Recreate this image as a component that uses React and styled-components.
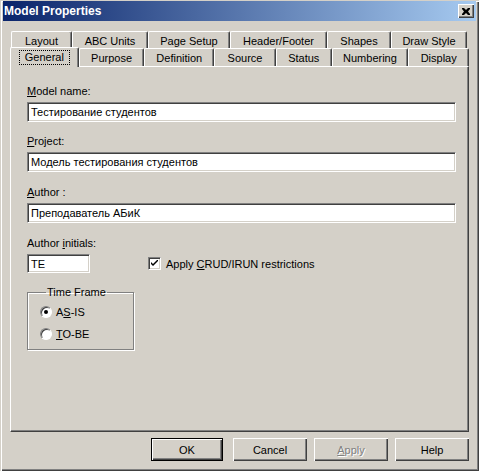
import React from "react";
import styled, { createGlobalStyle } from "styled-components";

const GlobalStyle = createGlobalStyle`
  html, body {
    margin: 0;
    padding: 0;
    background: #d4d0c8;
  }
  body {
    font-family: "Liberation Sans", Arial, sans-serif;
    font-size: 11px;
    color: #000;
  }
`;

const Window = styled.div`
  width: 479px;
  height: 471px;
  box-sizing: border-box;
  background: #d4d0c8;
  padding: 1px 3px 3px 3px;
  box-shadow: inset 1px 1px #d4d0c8, inset 2px 2px #fff, inset -1px -1px #404040,
    inset -2px -2px #808080;
  display: flex;
  flex-direction: column;
`;

const TitleBar = styled.div`
  height: 20px;
  display: flex;
  align-items: center;
  justify-content: space-between;
  padding: 0 2px 0 1px;
  background: linear-gradient(to right, #0a246a, #a6caf0);
`;

const Title = styled.span`
  color: #fff;
  font-weight: bold;
  font-size: 12px;
`;

const CloseButton = styled.div`
  width: 16px;
  height: 14px;
  box-sizing: border-box;
  background: #d4d0c8;
  display: flex;
  align-items: center;
  justify-content: center;
  box-shadow: inset 1px 1px #fff, inset -1px -1px #404040, inset -2px -2px #808080;
`;

const Content = styled.div`
  flex: 1;
  padding: 10px 7px 0 7px;
  display: flex;
  flex-direction: column;
`;

const TabRow = styled.div`
  display: flex;
  height: ${(p) => p.$height}px;
  align-items: flex-end;
  padding-left: ${(p) => p.$indent}px;
`;

const Tab = styled.div`
  position: relative;
  width: ${(p) => p.$width}px;
  height: ${(p) => (p.$active ? 20 : 18)}px;
  box-sizing: border-box;
  border-top: 1px solid #fff;
  border-left: 1px solid #fff;
  border-right: 1px solid #404040;
  border-radius: 2px 2px 0 0;
  box-shadow: inset -1px 0 #808080;
  background: #d4d0c8;
  display: flex;
  align-items: center;
  justify-content: center;
  padding-bottom: ${(p) => (p.$active ? 1 : 0)}px;
  margin-left: ${(p) => (p.$active ? -2 : 0)}px;
  margin-bottom: ${(p) => (p.$active ? -1 : 0)}px;
  z-index: ${(p) => (p.$active ? 2 : 1)};
`;

const FocusText = styled.span`
  border: 1px dotted #000;
  padding: 0 5px;
  line-height: 13px;
`;

const Panel = styled.div`
  position: relative;
  height: 366px;
  box-sizing: border-box;
  border-top: 1px solid #fff;
  border-left: 1px solid #fff;
  border-right: 1px solid #404040;
  border-bottom: 1px solid #404040;
  box-shadow: inset -1px -1px #808080;
  padding: 17px 14px 0 16px;
  display: flex;
  flex-direction: column;
`;

const Field = styled.div`
  display: flex;
  flex-direction: column;
  width: ${(p) => (p.$width ? `${p.$width}px` : "auto")};
  margin-bottom: ${(p) => p.$gap}px;
`;

const Label = styled.label`
  height: 14px;
  line-height: 14px;
  margin-bottom: 4px;
  white-space: nowrap;
`;

const Key = styled.span`
  text-decoration: underline;
`;

const Input = styled.div`
  width: ${(p) => p.$width || 429}px;
  height: ${(p) => p.$height || 20}px;
  box-sizing: border-box;
  background: #fff;
  border-top: 1px solid #808080;
  border-left: 1px solid #808080;
  border-right: 1px solid #fff;
  border-bottom: 1px solid #fff;
  box-shadow: inset 1px 1px #404040, inset -1px -1px #d4d0c8;
  padding: 0 3px;
  display: flex;
  align-items: center;
  white-space: nowrap;
`;

const InitialsRow = styled.div`
  display: flex;
  align-items: flex-end;
`;

const CheckLabel = styled.div`
  display: flex;
  align-items: center;
  gap: 5px;
  margin-left: 58px;
  margin-bottom: 3px;
`;

const CheckBox = styled.div`
  width: 13px;
  height: 13px;
  box-sizing: border-box;
  background: #fff;
  border-top: 1px solid #808080;
  border-left: 1px solid #808080;
  border-right: 1px solid #fff;
  border-bottom: 1px solid #fff;
  box-shadow: inset 1px 1px #404040, inset -1px -1px #d4d0c8;
  display: flex;
  align-items: center;
  justify-content: center;
`;

const GroupBox = styled.fieldset`
  width: 107px;
  height: 64px;
  box-sizing: border-box;
  margin: 13px 0 0 0;
  padding: 7px 0 0 12px;
  border: 1px solid #808080;
  box-shadow: 1px 1px #fff, inset 1px 1px #fff;
  display: flex;
  flex-direction: column;
  gap: 9px;
`;

const Legend = styled.legend`
  padding: 0 1px;
  margin-left: 6px;
  line-height: 12px;
`;

const RadioLabel = styled.div`
  display: flex;
  align-items: center;
  gap: 4px;
  height: 13px;
`;

const Radio = styled.div`
  width: 12px;
  height: 12px;
  box-sizing: border-box;
  border-radius: 50%;
  background: #fff;
  border: 1px solid;
  border-color: #808080 #fff #fff #808080;
  box-shadow: inset 1px 1px #404040;
  display: flex;
  align-items: center;
  justify-content: center;
`;

const Dot = styled.div`
  width: 4px;
  height: 4px;
  border-radius: 50%;
  background: #000;
`;

const ButtonRow = styled.div`
  display: flex;
  justify-content: flex-end;
  gap: 7px;
  padding: 6px 0 0 0;
`;

const Button = styled.div`
  width: ${(p) => (p.$default ? 72 : 74)}px;
  height: 23px;
  box-sizing: border-box;
  display: flex;
  align-items: center;
  justify-content: center;
  margin-right: ${(p) => (p.$default ? 3 : 0)}px;
  color: ${(p) => (p.$disabled ? "#808080" : "#000")};
  text-shadow: ${(p) => (p.$disabled ? "1px 1px #fff" : "none")};
  border: ${(p) => (p.$default ? "1px solid #000" : "none")};
  box-shadow: inset 1px 1px #fff, inset -1px -1px #404040, inset -2px -2px #808080;
`;

const backTabs = [
  ["Layout", 61],
  ["ABC Units", 76],
  ["Page Setup", 82],
  ["Header/Footer", 97],
  ["Shapes", 64],
  ["Draw Style", 76],
];

const frontTabs = [
  ["Purpose", 66],
  ["Definition", 70],
  ["Source", 62],
  ["Status", 56],
  ["Numbering", 77],
  ["Display", 61],
];

export default function App() {
  return (
    <>
      <GlobalStyle />
      <Window>
        <TitleBar>
          <Title>Model Properties</Title>
          <CloseButton>
            <svg width="8" height="7" viewBox="0 0 8 7">
              <path d="M0 0h2l2 2 2-2h2v1l-2 2.5 2 2.5v1h-2l-2-2-2 2h-2v-1l2-2.5-2-2.5z" fill="#000" />
            </svg>
          </CloseButton>
        </TitleBar>
        <Content>
          <TabRow $height={18} $indent={1}>
            {backTabs.map(([name, w]) => (
              <Tab key={name} $width={w}>
                {name}
              </Tab>
            ))}
          </TabRow>
          <TabRow $height={17} $indent={2}>
            <Tab $width={69} $active>
              <FocusText>General</FocusText>
            </Tab>
            {frontTabs.map(([name, w]) => (
              <Tab key={name} $width={w}>
                {name}
              </Tab>
            ))}
          </TabRow>
          <Panel>
            <Field $gap={12}>
              <Label>
                <Key>M</Key>odel name:
              </Label>
              <Input>Тестирование студентов</Input>
            </Field>
            <Field $gap={13}>
              <Label>
                <Key>P</Key>roject:
              </Label>
              <Input>Модель тестирования студентов</Input>
            </Field>
            <Field $gap={13}>
              <Label>
                <Key>A</Key>uthor :
              </Label>
              <Input>Преподаватель АБиК</Input>
            </Field>
            <InitialsRow>
              <Field $gap={0} $width={63}>
                <Label>
                  Author <Key>i</Key>nitials:
                </Label>
                <Input $width={63} $height={19}>
                  TE
                </Input>
              </Field>
              <CheckLabel>
                <CheckBox>
                  <svg width="7" height="7" viewBox="0 0 7 7">
                    <path d="M0 2l2 2 5-5v2l-5 5-2-2z" fill="#000" />
                  </svg>
                </CheckBox>
                <span>
                  Apply <Key>C</Key>RUD/IRUN restrictions
                </span>
              </CheckLabel>
            </InitialsRow>
            <GroupBox>
              <Legend>Time Frame</Legend>
              <RadioLabel>
                <Radio>
                  <Dot />
                </Radio>
                <span>
                  A<Key>S</Key>-IS
                </span>
              </RadioLabel>
              <RadioLabel>
                <Radio />
                <span>
                  <Key>T</Key>O-BE
                </span>
              </RadioLabel>
            </GroupBox>
          </Panel>
          <ButtonRow>
            <Button $default>OK</Button>
            <Button>Cancel</Button>
            <Button $disabled>
              <span>
                <Key>A</Key>pply
              </span>
            </Button>
            <Button>Help</Button>
          </ButtonRow>
        </Content>
      </Window>
    </>
  );
}
